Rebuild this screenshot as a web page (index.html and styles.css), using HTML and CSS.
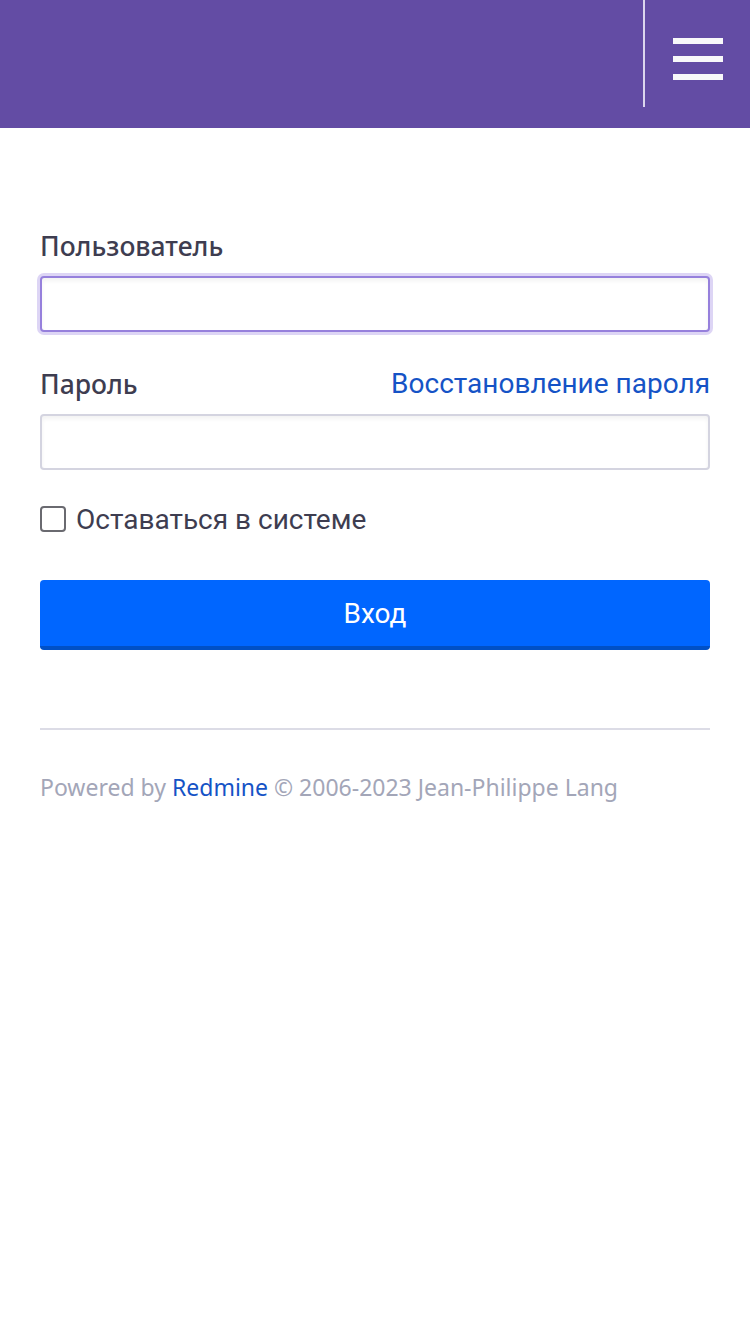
FILE: index.html
```html
<!DOCTYPE html>
<html lang="ru">
<head>
<meta charset="utf-8">
<link rel="stylesheet" href="styles.css">
</head>
<body>
<header class="topbar">
  <div class="spacer"></div>
  <div class="menu-btn">
    <span class="bar"></span><span class="bar"></span><span class="bar"></span>
  </div>
</header>
<main class="content">
  <form class="login">
    <label class="label" for="u">Пользователь</label>
    <input id="u" class="field focused" type="text">
    <div class="row">
      <label class="label" for="p">Пароль</label>
      <a class="link" href="#">Восстановление пароля</a>
    </div>
    <input id="p" class="field" type="password">
    <label class="remember"><span class="box"></span>Оставаться в системе</label>
    <button class="submit" type="button">Вход</button>
  </form>
  <hr class="divider">
  <p class="footer">Powered by <a href="#" class="flink">Redmine</a> © 2006-2023 Jean-Philippe Lang</p>
</main>
</body>
</html>
```
FILE: styles.css
```css
html, body { margin: 0; padding: 0; background: #fff; }
body { font-family: Roboto, "Noto Sans", sans-serif; color: #3b3b4f; }
.topbar { height: 128px; background: #634ca4; display: flex; }
.spacer { flex: 1; }
.menu-btn { width: 107px; height: 107px; border-left: 2px solid #dcd6ee; box-sizing: border-box; display: flex; flex-direction: column; justify-content: center; align-items: center; gap: 12px; padding-top: 11px; }
.bar { display: block; width: 50px; height: 6px; background: #f8f8fa; }
.content { padding: 0 40px; }
.login { display: flex; flex-direction: column; padding-top: 102px; }
.label { font-family: "Noto Sans", sans-serif; font-weight: 500; font-size: 26.5px; color: #3e3d50; line-height: 32px; }
.field { margin-top: 14px; height: 56px; box-sizing: border-box; border: 2px solid #d4d4e0; border-radius: 4px; background: #fff; box-shadow: inset 0 3px 4px rgba(0,0,0,0.05); outline: none; }
.field.focused { border-color: #9680dc; box-shadow: 0 0 0 3px #ddd5f5, inset 0 3px 4px rgba(0,0,0,0.05); }
.row { display: flex; justify-content: space-between; align-items: center; margin-top: 35px; }
.link { font-size: 28px; color: #1553c6; text-decoration: none; }
.remember { display: flex; align-items: center; gap: 10px; margin-top: 34px; font-size: 28px; color: #3e3d50; height: 30px; }
.box { width: 22px; height: 22px; border: 2px solid #6a6a70; border-radius: 4px; }
.submit { margin-top: 46px; height: 70px; border: none; border-bottom: 4px solid #0050c6; border-radius: 4px; background: #0066ff; color: #fff; font-family: Roboto, sans-serif; font-size: 28px; padding: 0; }
.divider { margin: 78px 0 0; border: none; border-top: 2px solid #dcdce6; }
.footer { margin: 41px 0 0; font-family: "Noto Sans", sans-serif; font-size: 23px; color: #a3a6b8; }
.flink { color: #1553c6; text-decoration: none; }
```
